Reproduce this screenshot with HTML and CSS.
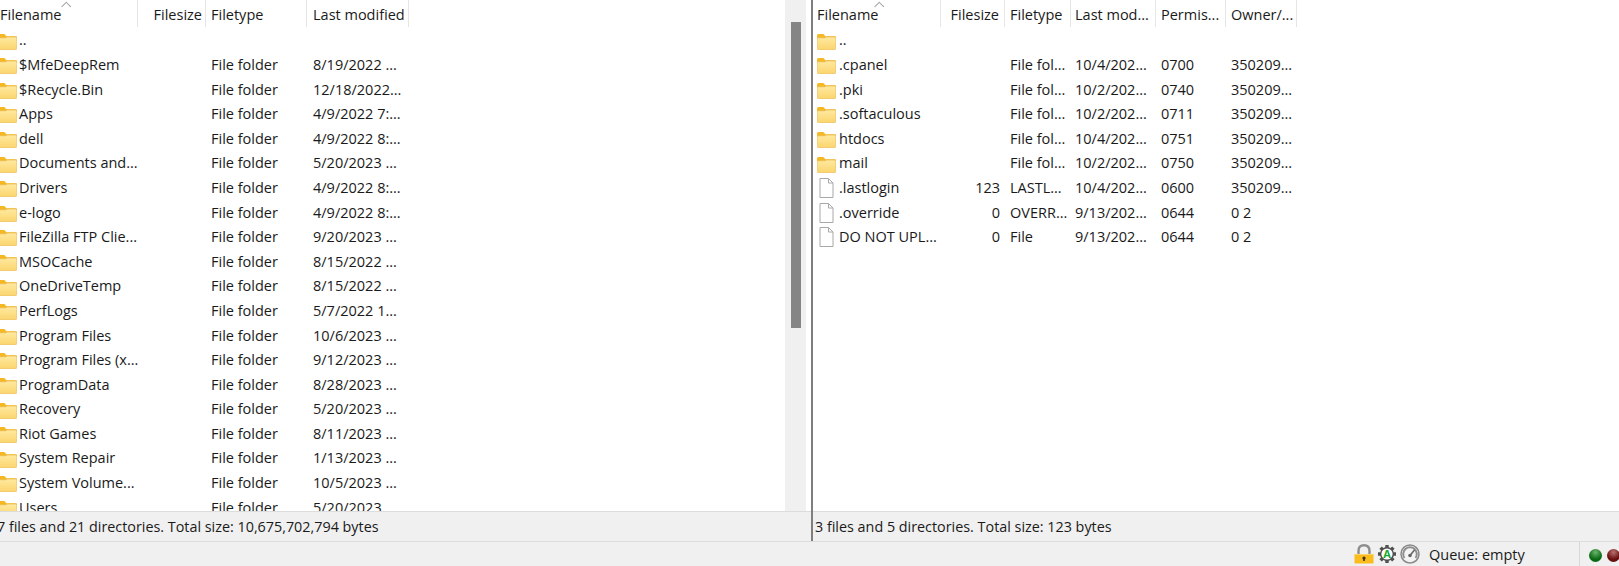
FILE: index.html
```html
<!DOCTYPE html>
<html lang="en">
<head>
    <meta charset="UTF-8">
    <meta name="viewport" content="width=device-width, initial-scale=1.0">
    <title>FileZilla</title>
    <link rel="stylesheet" href="styles.css">
</head>
<body>
    <svg class="defs" width="0" height="0">
        <defs>
            <linearGradient id="folderFill" x1="0" y1="0" x2="0" y2="1">
                <stop offset="0" stop-color="#ffe9a0"/>
                <stop offset="1" stop-color="#fbd56e"/>
            </linearGradient>
            <symbol id="folder" viewBox="0 0 18 16">
                <path d="M0 2.5 Q0 1 1.5 1 H6 L8 3 H17 Q18 3 18 4 V5 H0 Z" fill="#f5b722"/>
                <path d="M0.3 4.5 H7.5 L9 3.8 H17.7 V14.7 Q17.7 15.7 16.7 15.7 H1.3 Q0.3 15.7 0.3 14.7 Z" fill="url(#folderFill)" stroke="#e8bb55" stroke-width="0.6"/>
            </symbol>
            <symbol id="file" viewBox="0 0 16 20">
                <path d="M1.5 0.5 H10 L14.5 5 V19.5 H1.5 Z" fill="#fff" stroke="#a8a8a8"/>
                <path d="M10 0.5 V5 H14.5" fill="none" stroke="#a8a8a8"/>
            </symbol>
        </defs>
    </svg>

    <div class="panes">
        <section class="pane pane-local">
            <div class="list">
                <div class="row head">
                    <div class="c name">Filename<span class="sort"></span></div>
                    <div class="c size">Filesize</div>
                    <div class="c type">Filetype</div>
                    <div class="c date">Last modified</div>
                </div>
                <div class="row"><div class="c name"><svg class="ico"><use href="#folder"/></svg>..</div></div>
                <div class="row"><div class="c name"><svg class="ico"><use href="#folder"/></svg>$MfeDeepRem</div><div class="c size"></div><div class="c type">File folder</div><div class="c date">8/19/2022 ...</div></div>
                <div class="row"><div class="c name"><svg class="ico"><use href="#folder"/></svg>$Recycle.Bin</div><div class="c size"></div><div class="c type">File folder</div><div class="c date">12/18/2022...</div></div>
                <div class="row"><div class="c name"><svg class="ico"><use href="#folder"/></svg>Apps</div><div class="c size"></div><div class="c type">File folder</div><div class="c date">4/9/2022 7:...</div></div>
                <div class="row"><div class="c name"><svg class="ico"><use href="#folder"/></svg>dell</div><div class="c size"></div><div class="c type">File folder</div><div class="c date">4/9/2022 8:...</div></div>
                <div class="row"><div class="c name"><svg class="ico"><use href="#folder"/></svg>Documents and...</div><div class="c size"></div><div class="c type">File folder</div><div class="c date">5/20/2023 ...</div></div>
                <div class="row"><div class="c name"><svg class="ico"><use href="#folder"/></svg>Drivers</div><div class="c size"></div><div class="c type">File folder</div><div class="c date">4/9/2022 8:...</div></div>
                <div class="row"><div class="c name"><svg class="ico"><use href="#folder"/></svg>e-logo</div><div class="c size"></div><div class="c type">File folder</div><div class="c date">4/9/2022 8:...</div></div>
                <div class="row"><div class="c name"><svg class="ico"><use href="#folder"/></svg>FileZilla FTP Clie...</div><div class="c size"></div><div class="c type">File folder</div><div class="c date">9/20/2023 ...</div></div>
                <div class="row"><div class="c name"><svg class="ico"><use href="#folder"/></svg>MSOCache</div><div class="c size"></div><div class="c type">File folder</div><div class="c date">8/15/2022 ...</div></div>
                <div class="row"><div class="c name"><svg class="ico"><use href="#folder"/></svg>OneDriveTemp</div><div class="c size"></div><div class="c type">File folder</div><div class="c date">8/15/2022 ...</div></div>
                <div class="row"><div class="c name"><svg class="ico"><use href="#folder"/></svg>PerfLogs</div><div class="c size"></div><div class="c type">File folder</div><div class="c date">5/7/2022 1...</div></div>
                <div class="row"><div class="c name"><svg class="ico"><use href="#folder"/></svg>Program Files</div><div class="c size"></div><div class="c type">File folder</div><div class="c date">10/6/2023 ...</div></div>
                <div class="row"><div class="c name"><svg class="ico"><use href="#folder"/></svg>Program Files (x...</div><div class="c size"></div><div class="c type">File folder</div><div class="c date">9/12/2023 ...</div></div>
                <div class="row"><div class="c name"><svg class="ico"><use href="#folder"/></svg>ProgramData</div><div class="c size"></div><div class="c type">File folder</div><div class="c date">8/28/2023 ...</div></div>
                <div class="row"><div class="c name"><svg class="ico"><use href="#folder"/></svg>Recovery</div><div class="c size"></div><div class="c type">File folder</div><div class="c date">5/20/2023 ...</div></div>
                <div class="row"><div class="c name"><svg class="ico"><use href="#folder"/></svg>Riot Games</div><div class="c size"></div><div class="c type">File folder</div><div class="c date">8/11/2023 ...</div></div>
                <div class="row"><div class="c name"><svg class="ico"><use href="#folder"/></svg>System Repair</div><div class="c size"></div><div class="c type">File folder</div><div class="c date">1/13/2023 ...</div></div>
                <div class="row"><div class="c name"><svg class="ico"><use href="#folder"/></svg>System Volume...</div><div class="c size"></div><div class="c type">File folder</div><div class="c date">10/5/2023 ...</div></div>
                <div class="row"><div class="c name"><svg class="ico"><use href="#folder"/></svg>Users</div><div class="c size"></div><div class="c type">File folder</div><div class="c date">5/20/2023 ...</div></div>
                <div class="scrollbar"><div class="thumb"></div></div>
            </div>
            <div class="status"><span class="status-text">7 files and 21 directories. Total size: 10,675,702,794 bytes</span></div>
        </section>

        <section class="pane pane-remote">
            <div class="list">
                <div class="row head">
                    <div class="c name">Filename<span class="sort"></span></div>
                    <div class="c size">Filesize</div>
                    <div class="c type">Filetype</div>
                    <div class="c date">Last mod...</div>
                    <div class="c perm">Permis...</div>
                    <div class="c owner">Owner/...</div>
                </div>
                <div class="row"><div class="c name"><svg class="ico"><use href="#folder"/></svg>..</div></div>
                <div class="row"><div class="c name"><svg class="ico"><use href="#folder"/></svg>.cpanel</div><div class="c size"></div><div class="c type">File fol...</div><div class="c date">10/4/202...</div><div class="c perm">0700</div><div class="c owner">350209...</div></div>
                <div class="row"><div class="c name"><svg class="ico"><use href="#folder"/></svg>.pki</div><div class="c size"></div><div class="c type">File fol...</div><div class="c date">10/2/202...</div><div class="c perm">0740</div><div class="c owner">350209...</div></div>
                <div class="row"><div class="c name"><svg class="ico"><use href="#folder"/></svg>.softaculous</div><div class="c size"></div><div class="c type">File fol...</div><div class="c date">10/2/202...</div><div class="c perm">0711</div><div class="c owner">350209...</div></div>
                <div class="row"><div class="c name"><svg class="ico"><use href="#folder"/></svg>htdocs</div><div class="c size"></div><div class="c type">File fol...</div><div class="c date">10/4/202...</div><div class="c perm">0751</div><div class="c owner">350209...</div></div>
                <div class="row"><div class="c name"><svg class="ico"><use href="#folder"/></svg>mail</div><div class="c size"></div><div class="c type">File fol...</div><div class="c date">10/2/202...</div><div class="c perm">0750</div><div class="c owner">350209...</div></div>
                <div class="row"><div class="c name"><svg class="ico ico-file"><use href="#file"/></svg>.lastlogin</div><div class="c size">123</div><div class="c type">LASTL...</div><div class="c date">10/4/202...</div><div class="c perm">0600</div><div class="c owner">350209...</div></div>
                <div class="row"><div class="c name"><svg class="ico ico-file"><use href="#file"/></svg>.override</div><div class="c size">0</div><div class="c type">OVERR...</div><div class="c date">9/13/202...</div><div class="c perm">0644</div><div class="c owner">0 2</div></div>
                <div class="row"><div class="c name"><svg class="ico ico-file"><use href="#file"/></svg>DO NOT UPL...</div><div class="c size">0</div><div class="c type">File</div><div class="c date">9/13/202...</div><div class="c perm">0644</div><div class="c owner">0 2</div></div>
            </div>
            <div class="status"><span class="status-text">3 files and 5 directories. Total size: 123 bytes</span></div>
        </section>
    </div>

    <footer class="bottom">
        <!-- lock -->
        <svg class="tray tray-lock" viewBox="0 0 20 20">
            <path d="M4.5 11 V7 Q4.5 1.2 10 1.2 Q15.5 1.2 15.5 7 V11" fill="none" stroke="#8d8d8d" stroke-width="2.4"/>
            <rect x="0.5" y="10" width="19" height="9.5" fill="#fbbd1e"/>
            <rect x="0.5" y="10" width="19" height="1" fill="#fdd566"/>
            <circle cx="10" cy="14" r="1.6" fill="#3d3320"/>
            <rect x="9.2" y="14" width="1.6" height="3" fill="#3d3320"/>
        </svg>
        <!-- gear with A -->
        <svg class="tray tray-gear" viewBox="0 0 20 20">
            <circle cx="10" cy="10" r="7" fill="#505050"/>
            <path d="M10 1 V4 M10 16 V19 M1 10 H4 M16 10 H19 M3.6 3.6 L5.7 5.7 M14.3 14.3 L16.4 16.4 M3.6 16.4 L5.7 14.3 M14.3 5.7 L16.4 3.6" stroke="#505050" stroke-width="3.4"/>
            <circle cx="10" cy="10" r="5.6" fill="#fff"/>
            <text x="10" y="13.8" text-anchor="middle" class="gear-letter">A</text>
        </svg>
        <!-- speed gauge -->
        <svg class="tray tray-gauge" viewBox="0 0 20 20">
            <circle cx="10" cy="10" r="9" fill="#f4f4f4" stroke="#8a8a8a" stroke-width="1.5"/>
            <path d="M4.5 14 A6.8 6.8 0 1 1 15.5 14" fill="none" stroke="#8f8f8f" stroke-width="2"/>
            <path d="M10 11.5 L14.5 6" stroke="#666" stroke-width="1.6"/>
            <circle cx="10" cy="11.5" r="1.8" fill="#666"/>
        </svg>
        <span class="queue">Queue: empty</span>
        <div class="leds">
            <span class="led led-green"></span>
            <span class="led led-red"></span>
        </div>
    </footer>
</body>
</html>
```

FILE: styles.css
```css
* {
    box-sizing: border-box;
}
html, body {
    margin: 0;
    height: 100%;
}
body {
    width: 1619px;
    height: 566px;
    overflow: hidden;
    display: flex;
    flex-direction: column;
    background: #f0f0f0;
    font-family: "Open Sans", "Noto Sans", Arial, sans-serif;
    font-size: 14.5px;
    color: #1a1a1a;
}
.defs {
    position: absolute;
}
.panes {
    flex: 1;
    display: flex;
    min-height: 0;
}
.pane {
    display: flex;
    flex-direction: column;
    min-width: 0;
}
.pane-local {
    width: 811px;
}
.pane-remote {
    flex: 1;
    border-left: 2px solid #7f7f7f;
}
.list {
    flex: 1;
    position: relative;
    overflow: hidden;
    background: #fff;
    min-height: 0;
}
.row {
    display: flex;
    height: 24.6px;
    line-height: 24.6px;
    white-space: nowrap;
}
.row.head {
    height: 27px;
    line-height: 30px;
    margin-bottom: 1.4px;
}
.c {
    flex: none;
    padding: 0 5px;
    overflow: hidden;
}
.head .c {
    border-right: 1px solid #e5e5e5;
    position: relative;
}
.name {
    display: flex;
    align-items: center;
    width: 138px;
}
.head .name {
    display: block;
}
.size {
    width: 68px;
    padding-right: 3px;
    text-align: right;
}
.type {
    width: 101px;
}
.date {
    width: 102px;
    padding-left: 6px;
}
.perm {
    width: 70px;
}
.owner {
    width: 71px;
}

/* local list is scrolled a little to the left */
.pane-local .name {
    padding-left: 0;
}
.pane-local .ico {
    margin-left: -2px;
    margin-right: 2px;
}
.pane-remote .name {
    width: 128px;
    padding-left: 4px;
}
.pane-remote .size {
    width: 64px;
    padding-right: 5px;
}
.pane-remote .type {
    width: 66px;
}
.pane-remote .date {
    width: 85px;
    padding-left: 4px;
}

.ico {
    flex: none;
    width: 19px;
    height: 17px;
    margin-right: 3px;
    margin-top: 1px;
}
.ico-file {
    width: 19px;
    height: 20px;
    margin-top: 0;
}
.sort {
    position: absolute;
    left: 63px;
    top: 3px;
    width: 6.5px;
    height: 6.5px;
    border-top: 1px solid #a0a0a0;
    border-left: 1px solid #a0a0a0;
    transform: rotate(45deg);
}
.scrollbar {
    position: absolute;
    top: 0;
    bottom: 0;
    right: 5px;
    width: 21px;
    background: #f0f0f0;
}
.thumb {
    width: 10px;
    height: 306px;
    margin: 22px 0 0 6px;
    background: #858585;
}
.status {
    flex: none;
    height: 30px;
    line-height: 29px;
    font-size: 14.35px;
    background: #f0f0f0;
    border-top: 1px solid #dcdcdc;
    white-space: nowrap;
    overflow: hidden;
}
.pane-local .status-text {
    margin-left: -3px;
}
.pane-remote .status-text {
    margin-left: 2px;
}
.bottom {
    flex: none;
    height: 25px;
    display: flex;
    align-items: center;
    justify-content: flex-end;
    border-top: 1px solid #dcdcdc;
    background: #f0f0f0;
}
.tray {
    flex: none;
    width: 20px;
    height: 20px;
    margin-right: 3px;
}
.gear-letter {
    font-size: 11px;
    font-weight: 700;
    fill: #17a82e;
}
.queue {
    margin-left: 6px;
    width: 150px;
}
.leds {
    display: flex;
    gap: 5px;
    align-items: center;
    width: 40px;
    height: 100%;
    padding-left: 9px;
    padding-top: 3px;
    border-left: 1px solid #d8d8d8;
    overflow: hidden;
}
.led {
    flex: none;
    width: 13px;
    height: 13px;
    border-radius: 50%;
}
.led-green {
    background: radial-gradient(circle at 50% 25%, #6db56d, #0a6a14 60%);
}
.led-red {
    background: radial-gradient(circle at 50% 25%, #b87070, #6b1010 60%);
}
```
